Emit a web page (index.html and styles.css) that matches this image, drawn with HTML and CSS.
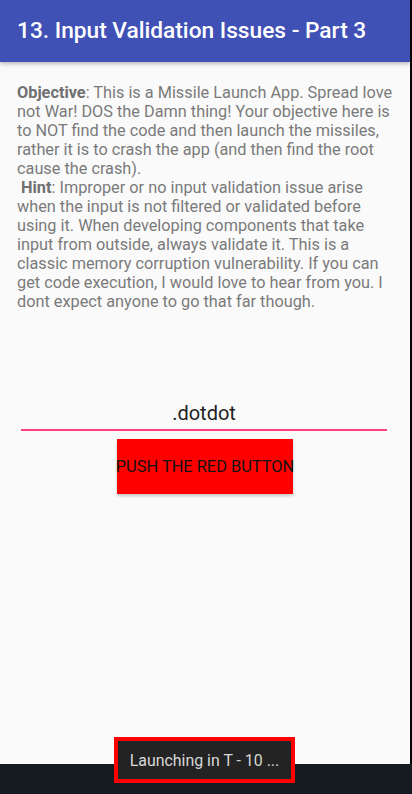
FILE: index.html
```html
<!DOCTYPE html>
<html>
<head>
<meta charset="utf-8">
<link rel="stylesheet" href="styles.css">
</head>
<body>
<div class="screen">
  <div class="app">
    <div class="main">
      <header class="appbar">13. Input Validation Issues - Part 3</header>
      <section class="content">
        <p class="desc"><b>Objective</b>: This is a Missile Launch App. Spread love<br>not War! DOS the Damn thing! Your objective here is<br>to NOT find the code and then launch the missiles,<br>rather it is to crash the app (and then find the root<br>cause the crash).<br>&nbsp;<b>Hint</b>: Improper or no input validation issue arise<br>when the input is not filtered or validated before<br>using it. When developing components that take<br>input from outside, always validate it. This is a<br>classic memory corruption vulnerability. If you can<br>get code execution, I would love to hear from you. I<br>dont expect anyone to go that far though.</p>
        <div class="field">.dotdot</div>
        <div class="btn">PUSH THE RED BUTTON</div>
      </section>
    </div>
    <div class="edge"></div>
  </div>
  <div class="navbar"></div>
  <div class="toast"><span>Launching in T - 10 ...</span></div>
</div>
</body>
</html>
```
FILE: styles.css
```css
html, body {
  margin: 0;
  padding: 0;
  background: #fafafa;
}
.screen {
  position: relative;
  width: 412px;
  height: 794px;
  display: flex;
  flex-direction: column;
  font-family: Roboto, "Liberation Sans", sans-serif;
  overflow: hidden;
}
.app {
  display: flex;
  height: 764px;
}
.main {
  width: 410px;
  display: flex;
  flex-direction: column;
  background: #fafafa;
}
.edge {
  width: 2px;
  background: #050505;
}
.appbar {
  height: 62px;
  background: #3f51b5;
  color: #fff;
  font-size: 22.7px;
  font-weight: 500;
  line-height: 62px;
  padding-left: 17px;
  box-shadow: 0 2px 4px rgba(0,0,0,0.25);
  position: relative;
  z-index: 1;
}
.content {
  flex: 1;
  display: flex;
  flex-direction: column;
}
.desc {
  margin: 21px 0 0 17px;
  font-size: 16.3px;
  line-height: 19px;
  color: #7a7a7a;
  white-space: nowrap;
}
.desc b {
  font-weight: 700;
  color: #707070;
}
.field {
  margin: 86px 23px 0 21px;
  height: 32px;
  border-bottom: 2px solid #ff4081;
  text-align: center;
  font-size: 20px;
  line-height: 32px;
  color: #222;
}
.btn {
  margin: 8px auto 0;
  width: 176px;
  height: 55px;
  background: #ff0000;
  color: #111;
  font-size: 16.4px;
  line-height: 55px;
  text-align: center;
  white-space: nowrap;
  box-shadow: 0 2px 3px rgba(0,0,0,0.2);
  display: flex;
  justify-content: center;
}
.navbar {
  height: 30px;
  background: #161b22;
}
.toast {
  position: absolute;
  left: 114px;
  top: 737px;
  width: 181px;
  height: 46px;
  box-sizing: border-box;
  border: 4px solid #ff0000;
  background: #232323;
  display: flex;
  align-items: center;
  justify-content: center;
}
.toast span {
  color: #d8d8d8;
  font-size: 15.9px;
}
```
